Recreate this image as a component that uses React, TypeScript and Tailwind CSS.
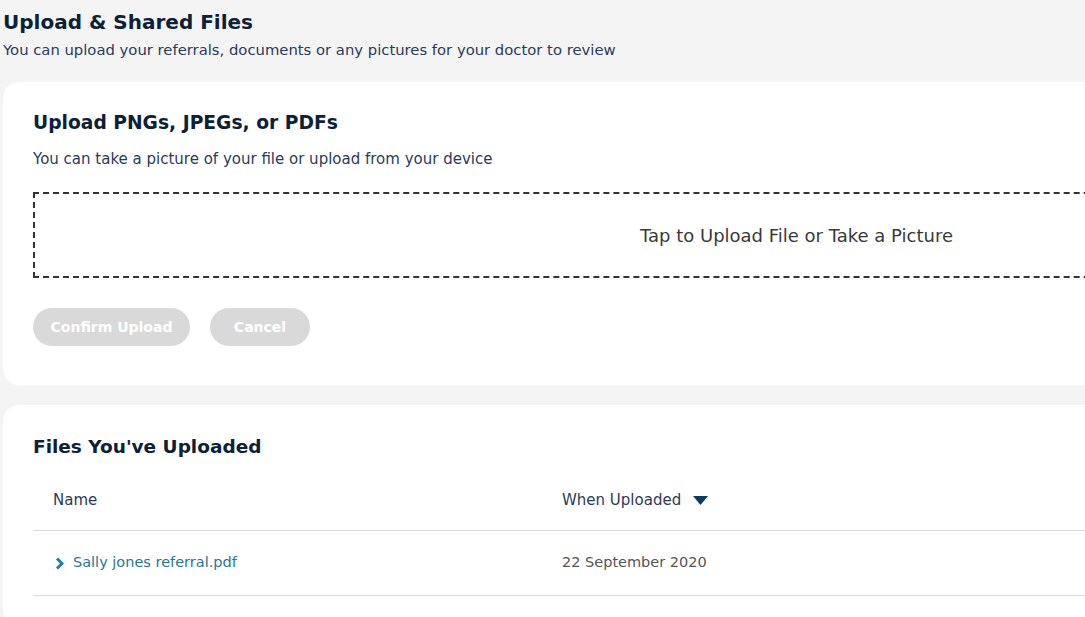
export default function App() {
  return (
    <div className="w-[1085px] h-[617px] overflow-hidden bg-[#f4f4f4] font-['DejaVu_Sans',sans-serif]">
      <div className="w-[1590px] pl-[3px]">
        <h1 className="pt-[8px] text-[20px] leading-[28px] font-bold text-[#0c2136]">Upload &amp; Shared Files</h1>
        <p className="mt-[4px] text-[14.8px] leading-[20px] text-[#2b3a5c]">
          You can upload your referrals, documents or any pictures for your doctor to review
        </p>

        <section className="mt-[22px] bg-white rounded-[16px] px-[30px] pt-[28px] pb-[39px]">
          <h2 className="text-[18.7px] leading-[26px] font-bold text-[#0c2136]">Upload PNGs, JPEGs, or PDFs</h2>
          <p className="mt-[13px] text-[15px] leading-[20px] text-[#2b3a5c]">
            You can take a picture of your file or upload from your device
          </p>
          <div className="mt-[23px] h-[86px] border-2 border-dashed border-[#333] flex items-center justify-center">
            <span className="text-[18px] text-[#3a3a3a]">Tap to Upload File or Take a Picture</span>
          </div>
          <div className="mt-[30px] flex gap-[20px]">
            <button className="h-[38px] w-[157px] rounded-full bg-[#d9d9d9] text-white text-[14px] font-bold">
              Confirm Upload
            </button>
            <button className="h-[38px] w-[100px] rounded-full bg-[#d9d9d9] text-white text-[14px] font-bold">
              Cancel
            </button>
          </div>
        </section>

        <section className="mt-[20px] bg-white rounded-[16px] px-[30px] pt-[29px] pb-[30px]">
          <h2 className="text-[18.5px] leading-[26px] font-bold text-[#0c2136]">Files You&apos;ve Uploaded</h2>
          <div className="mt-[10px] grid grid-cols-3 h-[61px] items-center border-b border-[#dcdcdc] text-[15px] text-[#2b3a5c]">
            <div className="pl-[20px]">Name</div>
            <div className="pl-[20px] flex items-center gap-[12px]">
              When Uploaded
              <svg width="15" height="9" viewBox="0 0 15 9">
                <path d="M0 0 H15 L7.5 9 Z" fill="#0b3b5f" />
              </svg>
            </div>
            <div />
          </div>
          <div className="grid grid-cols-3 h-[65px] items-center border-b border-[#dcdcdc] text-[14.5px]">
            <div className="pl-[22px] flex items-center gap-[9px] text-[#1f7896]">
              <svg width="9" height="13" viewBox="0 0 9 13">
                <path d="M2 1.5 L7 6.5 L2 11.5" fill="none" stroke="#1d7fa0" strokeWidth="3" />
              </svg>
              Sally jones referral.pdf
            </div>
            <div className="pl-[20px] text-[#555]">22 September 2020</div>
            <div />
          </div>
        </section>
      </div>
    </div>
  );
}
